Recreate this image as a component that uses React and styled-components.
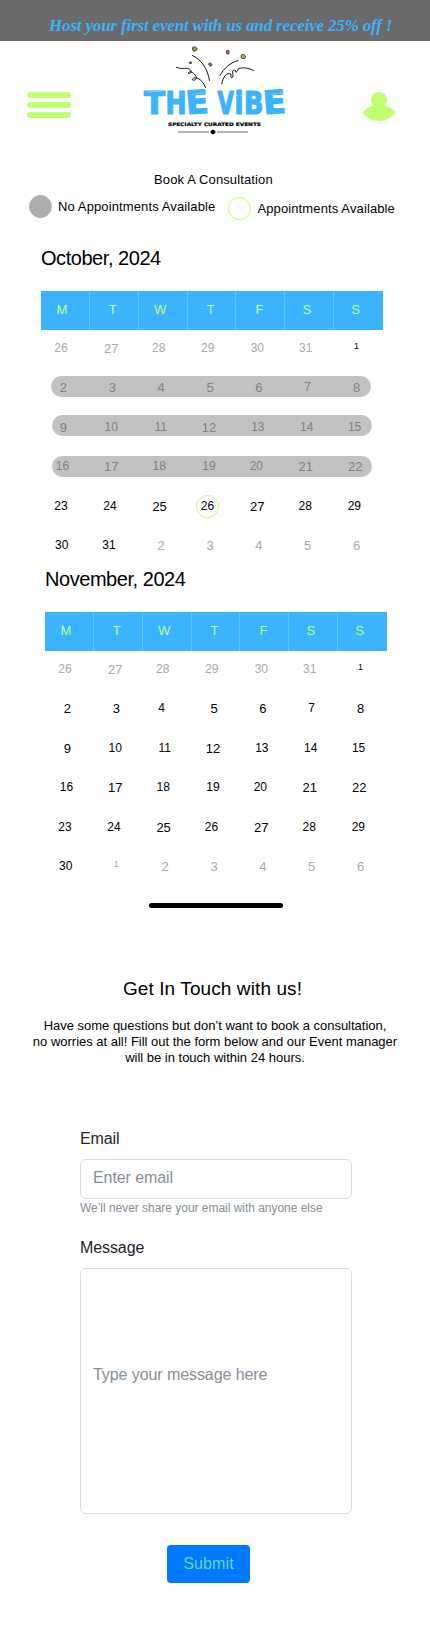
import React from "react";
import styled, { createGlobalStyle } from "styled-components";

const lime = "#c1ff72";
const sky = "#3bb3ff";

const GlobalStyle = createGlobalStyle`
  * { box-sizing: border-box; }
  body {
    margin: 0;
    background: #fff;
    color: #000;
    font-family: "Liberation Sans", Arial, sans-serif;
  }
`;

const Page = styled.main`
  width: 430px;
  min-height: 1640px;
  overflow: hidden;
`;

const Banner = styled.div`
  height: 41px;
  padding: 15px 0 0 49px;
  background: #6a6a6a;
  color: ${sky};
  font: italic bold 17px/22px "Liberation Serif", serif;
  letter-spacing: -0.17px;
  white-space: nowrap;
`;

const Header = styled.header`
  display: flex;
  align-items: flex-start;
  height: 130px;
  padding-left: 27px;
`;

const MenuButton = styled.button`
  display: flex;
  flex-direction: column;
  gap: 4px;
  width: 44px;
  margin-top: 51px;
  padding: 0;
  border: 0;
  background: none;
`;

const MenuBar = styled.span`
  height: 6px;
  border-radius: 3px;
  background: ${lime};
`;

const LogoArt = styled.svg`
  width: 160px;
  height: 100px;
  margin-left: 64px;
`;

const AvatarArt = styled.svg`
  width: 34px;
  height: 30px;
  margin: 51px 0 0 67px;
`;

const BookingTitle = styled.h1`
  margin: 0;
  padding-left: 154px;
  font-size: 13px;
  font-weight: 400;
  line-height: 18px;
  letter-spacing: 0.13px;
`;

const Legend = styled.div`
  display: flex;
  align-items: flex-start;
  height: 57px;
  padding: 6px 0 0 29px;
`;

const LegendItem = styled.div`
  display: flex;
  align-items: center;
  gap: 6px;
  height: 23px;
  margin: ${(p) => (p.$open ? "2px 0 0 13px" : "0")};
  font-size: 13px;
  letter-spacing: 0.12px;
  white-space: nowrap;
`;

const LegendDot = styled.span`
  width: 23px;
  height: 23px;
  border-radius: 50%;
  border: 1px solid ${(p) => (p.$open ? lime : "#adadad")};
  background: ${(p) => (p.$open ? "transparent" : "#adadad")};
`;

const Calendar = styled.section`
  width: 342px;
  height: 321px;
  margin-left: ${(p) => p.$left}px;
`;

const MonthTitle = styled.h2`
  height: 45px;
  margin: 0;
  font-size: 20px;
  font-weight: 400;
  line-height: 24px;
  letter-spacing: -0.45px;
`;

const Weekdays = styled.div`
  display: grid;
  grid-template-columns: repeat(7, 1fr);
  height: 39px;
  background: ${sky};
`;

const Weekday = styled.div`
  padding-right: ${(p) => p.$trail}px;
  border-right: 1px solid #62c2ff;
  color: ${lime};
  font-size: 13px;
  line-height: 37px;
  text-align: center;

  &:last-child { border-right-color: transparent; }
`;

const Week = styled.div`
  position: relative;
  display: grid;
  grid-template-columns: repeat(7, 1fr);
  height: 39.4px;
`;

const BookedPill = styled.span`
  position: absolute;
  top: ${(p) => p.$top}px;
  left: ${(p) => p.$left}px;
  width: 320px;
  height: 21px;
  border-radius: 11px;
  background: #c2c2c2;
`;

const sizes = { t: 9, s: 12, l: 13 };
const drops = { t: 9, s: 11, l: 12 };
const tones = { on: "#000", off: "#a9a9a9", booked: "#808080" };

const Day = styled.div`
  position: relative;
  padding: ${(p) => drops[p.$size]}px ${(p) => p.$trail}px 0 0;
  color: ${(p) => tones[p.$tone]};
  font-size: ${(p) => sizes[p.$size]}px;
  line-height: 14px;
  text-align: center;
`;

const OpenRing = styled.span`
  position: absolute;
  top: 7px;
  left: 8px;
  width: 23px;
  height: 23px;
  border: 1px solid ${lime};
  border-radius: 50%;
`;

const HomeBar = styled.div`
  width: 134px;
  height: 5px;
  margin: 15px 0 0 149px;
  border-radius: 3px;
  background: #000;
`;

const Contact = styled.section`
  padding-top: 68px;
`;

const ContactTitle = styled.h2`
  margin: 0;
  padding-right: 5px;
  font-size: 19px;
  font-weight: 400;
  line-height: 26px;
  letter-spacing: 0.1px;
  text-align: center;
`;

const ContactText = styled.p`
  margin: 16px 0 0;
  font-size: 13px;
  line-height: 16px;
  letter-spacing: -0.01px;
  text-align: center;
  white-space: nowrap;
`;

const Form = styled.form`
  display: flex;
  flex-direction: column;
  width: 272px;
  margin: 61px 0 0 80px;
`;

const Label = styled.label`
  margin-top: ${(p) => p.$top || 0}px;
  color: #212529;
  font-size: 16px;
  line-height: 24px;
  letter-spacing: -0.1px;
`;

const Field = styled.div`
  display: flex;
  align-items: center;
  height: ${(p) => p.$height}px;
  margin-top: 8px;
  padding: 0 0 ${(p) => p.$lift}px 12px;
  border: 1px solid #dcdddf;
  border-radius: 6px;
  color: #868e99;
  font-size: 16px;
  letter-spacing: -0.08px;
`;

const Hint = styled.small`
  color: #868e99;
  font-size: 12px;
  line-height: 18px;
  letter-spacing: -0.03px;
`;

const Submit = styled.button`
  width: 83px;
  height: 38px;
  margin: 31px 0 0 87px;
  padding: 0 0 1px;
  border: 0;
  border-radius: 4px;
  background: #007bff;
  color: #6ad3b5;
  font: 16px "Liberation Sans", Arial, sans-serif;
  letter-spacing: 0.15px;
`;

const weekdays = [["M", 6], ["T", 2], ["W", 5], ["T", 2], ["F", 2], ["S", 5], ["S", 5]];

const days = (text) =>
  text.split(" ").map((part) => {
    const [n, size, trail, tone = "on"] = part.split(":");
    return { n, size, trail: Number(trail), tone };
  });

const firstWeek = "26:s:9:off 27:l:6:off 28:s:9:off 29:s:8.5:off 30:s:7:off 31:s:8:off 1:t:4";
const weekOf9 = "9:l:4 10:s:6 11:s:5 12:l:6 13:s:6 14:s:6 15:s:8";
const weekOf16 = "16:s:6 17:l:6 18:s:8 19:s:6 20:s:9 21:l:8 22:l:6.5";
const weekOf23 = "23:s:9 24:s:8.5 25:l:7 26:s:9 27:l:7 28:s:9 29:s:8.5";

const october = [
  { days: days(firstWeek) },
  { days: days("2:l:4 3:l:4 4:l:4 5:l:4 6:l:4 7:s:4 8:l:4"), pill: [6.6, 10] },
  { days: days(weekOf9), pill: [6.2, 11] },
  { days: days(weekOf16), pill: [7.8, 11] },
  { days: days(weekOf23), open: "26" },
  { days: days("30:s:7.5 31:s:10.5 2:l:4:off 3:l:4:off 4:l:4:off 5:l:4:off 6:l:4:off") },
];

const november = [
  { days: days(firstWeek) },
  { days: days("2:l:4 3:l:4 4:s:11 5:l:4 6:l:4 7:s:4 8:l:4") },
  { days: days(weekOf9) },
  { days: days(weekOf16) },
  { days: days(weekOf23) },
  { days: days("30:s:7.5 1:t:4:off 2:l:4:off 3:l:4:off 4:l:4:off 5:l:4:off 6:l:4:off") },
];

function Month({ title, weeks, left }) {
  return (
    <Calendar $left={left}>
      <MonthTitle>{title}</MonthTitle>
      <Weekdays>
        {weekdays.map(([name, trail], i) => (
          <Weekday key={i} $trail={trail}>{name}</Weekday>
        ))}
      </Weekdays>
      {weeks.map((week, i) => (
        <Week key={i}>
          {week.pill && <BookedPill $top={week.pill[0]} $left={week.pill[1]} />}
          {week.days.map((d, j) => (
            <Day key={j} $size={d.size} $trail={d.trail} $tone={week.pill ? "booked" : d.tone}>
              {week.open === d.n && <OpenRing />}
              {d.n}
            </Day>
          ))}
        </Week>
      ))}
    </Calendar>
  );
}

// Each wordmark letter: glyph, x, baseline, drawn advance, tilt.
const wordmark = [
  ["T", 9, 72.5, 21, 0],
  ["H", 30.4, 72.5, 21, 0],
  ["E", 51.8, 73, 22.5, -4],
  ["V", 82.5, 72.5, 16.5, 0],
  ["i", 99.6, 72.5, 9, 0],
  ["B", 109, 72.5, 19.5, 0],
  ["E", 129, 73, 22.5, -4],
];

function Logo() {
  return (
    <LogoArt viewBox="0 0 160 100" role="img" aria-label="The Vibe">
      <g fill="none" stroke="#111" strokeWidth="1" strokeLinecap="round" transform="translate(0 -1)">
        <path d="M57.5 15.500C66 19.500 72.500 28 74.500 40.500" />
        <path d="M103 20.500C95 23 89 28 85 35.500" />
        <path d="M41.500 27.500C48 30 52 26.500 55.500 30C58 33 52.500 35 53.500 32.500C55 30.500 59.500 33 61 36.500C63 40 56.500 41.500 57.500 39C59 36.500 67 37.500 70.500 47.500" />
        <path d="M118.500 30.500C113 27.500 108 27.500 103.500 28.500C102 33 100 33 100.500 30.500C98 29.500 97 30.500 98 34.500C98 39.500 95 38.500 96 34C92 32 87.500 37 86.800 44" />
      </g>
      <g stroke="#333" strokeWidth="0.9" transform="translate(0 -1)">
        <path d="M57.300 7.800l1.700-1 1.800.6 1.400 1-.8 1.900-1.700.9-1.700-.5z" fill="#7cad45" />
        <path d="M106.300 15.200l1.800-.8 1.700.9 1 1.600-1.200 1.500-1.900.2-1.500-1z" fill="#93bf50" />
        <ellipse cx="92.700" cy="12.300" rx="1.400" ry="2" fill="#e75653" />
        <ellipse cx="75.300" cy="24.500" rx="1.700" ry="1.300" transform="rotate(35 75.300 24.500)" fill="#c56434" />
        <ellipse cx="55.500" cy="22.700" rx="1.200" ry=".9" fill="#a33" />
      </g>
      <text
        fill={sky}
        stroke={sky}
        strokeWidth="1.200"
        strokeLinejoin="round"
        fontFamily="'DejaVu Sans Condensed', 'DejaVu Sans', sans-serif"
        fontStretch="condensed"
        fontWeight="700"
        fontSize="32"
      >
        {wordmark.map(([glyph, x, y, advance, tilt], i) => (
          <tspan
            key={i} x={x} y={y} rotate={tilt}
            textLength={advance} lengthAdjust="spacingAndGlyphs"
          >
            {glyph}
          </tspan>
        ))}
      </text>
      <g fill="none" stroke="#fff" strokeWidth="0.5" opacity="0.6">
        <path d="M12 51L28 50.200M56 53.500L69 51.800M134 53.500L147 51.800" />
      </g>
      <text
        x="33" y="84.500" textLength="93" lengthAdjust="spacingAndGlyphs"
        fontFamily="'DejaVu Sans', sans-serif" fontWeight="700" fontSize="4.800"
        stroke="#000" strokeWidth="0.2"
      >
        SPECIALTY CURATED EVENTS
      </text>
      <path d="M43 91H74M82 91H113" stroke="#444" strokeWidth="0.8" />
      <path d="M78 88.500L80 89.700l.6 1.300L80 92.300 78 93.600 76 92.300l-.6-1.300L76 89.700z" />
    </LogoArt>
  );
}

export default function App() {
  return (
    <Page>
      <GlobalStyle />
      <Banner>Host your first event with us and receive 25% off !</Banner>
      <Header>
        <MenuButton aria-label="Menu">
          <MenuBar />
          <MenuBar />
          <MenuBar />
        </MenuButton>
        <Logo />
        <AvatarArt viewBox="0 0 34 30" fill={lime}>
          <circle cx="17" cy="8" r="8" />
          <path d="M0.700 20.500C4 16.500 8 14 12 13.500H22C26 14 30 16.500 33.700 20C30 25.500 24 29 17.200 29C10.500 29 4.500 26 0.700 20.500Z" />
        </AvatarArt>
      </Header>
      <BookingTitle>Book A Consultation</BookingTitle>
      <Legend>
        <LegendItem>
          <LegendDot />
          No Appointments Available
        </LegendItem>
        <LegendItem $open>
          <LegendDot $open />
          Appointments Available
        </LegendItem>
      </Legend>
      <Month title="October, 2024" weeks={october} left={41} />
      <Month title="November, 2024" weeks={november} left={45} />
      <HomeBar />
      <Contact>
        <ContactTitle>Get In Touch with us!</ContactTitle>
        <ContactText>
          Have some questions but don’t want to book a consultation,
          <br />
          no worries at all! Fill out the form below and our Event manager
          <br />
          will be in touch within 24 hours.
        </ContactText>
      </Contact>
      <Form>
        <Label>Email</Label>
        <Field $height={40} $lift={3}>Enter email</Field>
        <Hint>We’ll never share your email with anyone else</Hint>
        <Label $top={19}>Message</Label>
        <Field $height={246} $lift={32}>Type your message here</Field>
        <Submit type="button">Submit</Submit>
      </Form>
    </Page>
  );
}
